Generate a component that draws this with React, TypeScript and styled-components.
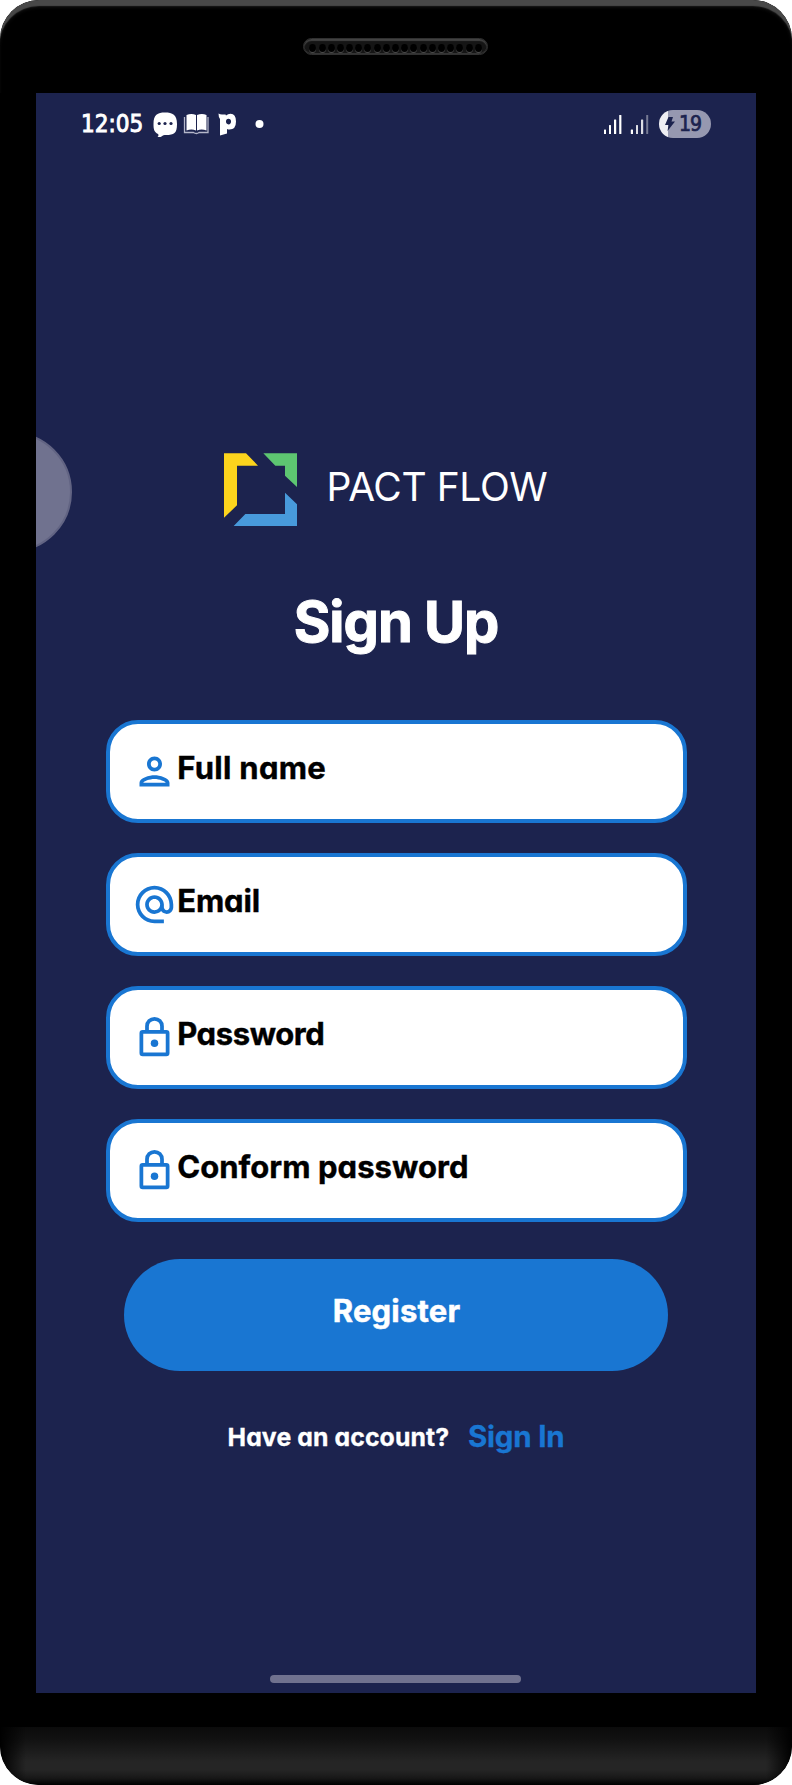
import React from "react";
import styled, { createGlobalStyle } from "styled-components";
import { MdAlternateEmail, MdOutlinePerson } from "react-icons/md";

const navy = "#1c234e";
const blue = "#1976d2";
const haze = "#70728f";

const GlobalStyle = createGlobalStyle`
  * { box-sizing: border-box; }
  body { margin: 0; background: #fff; }
`;

const Phone = styled.div`
  width: 792px;
  height: 1785px;
  display: flex;
  flex-direction: column;
  align-items: center;
  overflow: hidden;
  border-radius: 39px;
  background: #000;
  font-family: Inter, "Liberation Sans", sans-serif;
  font-feature-settings: "cv11";
`;

const TopBezel = styled.div`
  width: 100%;
  height: 93px;
  flex: none;
  display: flex;
  justify-content: center;
  align-items: flex-start;
  padding: 38px 1px 0 0;
  border-radius: 39px 39px 0 0;
  box-shadow: inset 0 7px 1px -1px #484848, inset 0 8px 5px -3px #333;
`;

const Speaker = styled.div`
  width: 185px;
  height: 17px;
  display: flex;
  justify-content: center;
  align-items: center;
  gap: 2.2px;
  padding-top: 2px;
  border-radius: 9px;
  background: #151515;
  border: 1px solid #303030;
  box-shadow: inset 0 2px 1px #424242, inset 0 -1px 0 #343434;
`;

const Hole = styled.span`
  width: 7px;
  height: 8px;
  border-radius: 50%;
  background: #000;
  box-shadow: 0 1px 0 #4a4a4a;
`;

const Screen = styled.main`
  position: relative;
  width: 720px;
  height: 1600px;
  flex: none;
  display: flex;
  flex-direction: column;
  align-items: center;
  overflow: hidden;
  background: ${navy};
`;

const BottomBezel = styled.div`
  width: 100%;
  height: 58px;
  margin-top: 34px;
  flex: none;
  border-radius: 0 0 39px 39px;
  background:
    linear-gradient(90deg, #000, transparent 26px, transparent 766px, #000),
    linear-gradient(#0b0b0b, #111 20%, #252525 60%, #252525 74%, #181818 88%, #000);
`;

const StatusBar = styled.div`
  width: 100%;
  height: 62px;
  flex: none;
  display: flex;
  justify-content: space-between;
  align-items: center;
  padding: 0 45px;
`;

const StatusGroup = styled.div`
  display: flex;
  align-items: center;
`;

const Clock = styled.span`
  width: 72px;
  font: 500 24px/30px "DejaVu Sans", sans-serif;
  font-stretch: condensed;
  letter-spacing: 0;
  -webkit-text-stroke: 0.9px #fff;
  color: #fff;
`;

const Battery = styled.span`
  width: 52px;
  height: 28px;
  margin-left: 10px;
  display: flex;
  align-items: center;
  padding-left: 6px;
  gap: 4px;
  border-radius: 14px;
  background: linear-gradient(90deg, #eeeef3 9px, #9698b0 9px);
  color: ${navy};
  font: 500 21px/28px "DejaVu Sans", sans-serif;
  font-stretch: condensed;
  letter-spacing: -1px;
  -webkit-text-stroke: 0.7px ${navy};
`;

const Brand = styled.div`
  width: 324px;
  height: 73px;
  margin-top: 298px;
  flex: none;
  display: flex;
  align-items: center;
  margin-left: -20px;
`;

const BrandName = styled.span`
  margin: -5px 0 0 29.5px;
  font-size: 39px;
  line-height: 48px;
  font-weight: 400;
  letter-spacing: -0.4px;
  white-space: nowrap;
  color: #fff;
`;

const Title = styled.h1`
  margin: 66px 0 68px;
  font-size: 56px;
  line-height: 60px;
  font-weight: 700;
  letter-spacing: -1px;
  -webkit-text-stroke: 1px #fff;
  color: #fff;
`;

const Form = styled.form`
  display: flex;
  flex-direction: column;
  align-items: center;
  gap: 30px;
`;

const Field = styled.label`
  width: 581px;
  height: 103px;
  display: flex;
  align-items: center;
  padding-left: 22px;
  border: 4px solid ${blue};
  border-radius: 32px;
  background: #fff;
  color: ${blue};
`;

const FieldText = styled.span<{ $track: number }>`
  padding: 0 0 7px 0.7px;
  font-size: 31px;
  line-height: 36px;
  font-weight: 700;
  letter-spacing: ${(p) => p.$track}px;
  -webkit-text-stroke: 0.4px #000;
  color: #000;
`;

const Register = styled.button`
  width: 544px;
  height: 112px;
  margin-top: 7px;
  padding: 0 0 8px 1px;
  border: 0;
  border-radius: 56px;
  background: ${blue};
  color: #fff;
  font: 700 31px/40px Inter, sans-serif;
  font-feature-settings: inherit;
  letter-spacing: 0.2px;
  -webkit-text-stroke: 0.5px #fff;
`;

const Footer = styled.div`
  width: 337px;
  height: 40px;
  margin-top: 46px;
  display: flex;
  align-items: center;
  justify-content: space-between;
  white-space: nowrap;
`;

const Question = styled.span`
  font-size: 24.8px;
  font-weight: 700;
  letter-spacing: 0.1px;
  -webkit-text-stroke: 0.3px #fff;
  color: #fff;
`;

const SignIn = styled.a`
  padding-bottom: 2px;
  font-size: 29.5px;
  font-weight: 650;
  letter-spacing: -0.2px;
  -webkit-text-stroke: 0.3px ${blue};
  color: ${blue};
`;

const HomeBar = styled.div`
  width: 251px;
  height: 8px;
  margin: auto 1px 10px 0;
  border-radius: 4px;
  background: ${haze};
`;

const AssistBubble = styled.div`
  position: absolute;
  left: -84px;
  top: 339px;
  width: 120px;
  height: 120px;
  border-radius: 50%;
  border: 2px solid #626483;
  background: ${haze};
`;

const Notifications = () => (
  <svg width="112" height="26" viewBox="0 0 112 26" fill="#fff">
    <path d="M12 1.5C19.5 1.5 24 3.5 24 13s-3 11-11 11c-2 0-3 0-4.500 1.500-1 .7-3 1-4 .5 1-1 1.300-2 .5-3C1 21 .5 18 .5 13 .5 3.500 4.500 1.500 12 1.500z" />
    <g fill={navy}>
      <circle cx="6.200" cy="12.500" r="1.600" />
      <circle cx="12" cy="12.500" r="1.600" />
      <circle cx="18" cy="12.500" r="1.600" />
    </g>
    <path d="M33.500 4q5-2 9.500 0v15.500q-4.500-2-9.500 0zM44 4q5-2 9.500 0v15.500q-5-2-9.500 0z" />
    <path d="M31.500 6v15.500h9q3 2 5.500 0h9V6" fill="none" stroke="#b5b7ca" strokeWidth="1.300" />
    <path
      fillRule="evenodd"
      d="M65.500 2.500q1.500 1 3.500 1h3.500l.5 1q2-1.800 4.500-1.800 5.500 0 5.500 7.800 0 8-6.500 8-1.300 0-2.500-.5v4.500L67 24.500V8q-1.500-1.500-1.500-5.500zM75.500 7.800a2.500 2.800 0 1 0 .01 5.600a2.500 2.800 0 1 0-.01-5.600z"
    />
    <circle cx="106.500" cy="13" r="4" />
  </svg>
);

const Signal = () => (
  <svg width="45" height="21" viewBox="0 0 45 21" fill="#fff">
    <rect x="0" y="15.500" width="2" height="4.500" rx=".5" />
    <rect x="5" y="11" width="2" height="9" rx=".5" />
    <rect x="10" y="5.500" width="2.200" height="14.500" rx=".5" />
    <rect x="15.200" y="1" width="2.200" height="19" rx=".5" />
    <rect x="26.800" y="15.500" width="2.200" height="4.500" rx=".5" />
    <rect x="32" y="11" width="2" height="9" rx=".5" opacity=".85" />
    <rect x="37" y="5.500" width="2.200" height="14.500" rx=".5" opacity=".85" />
    <rect x="42.200" y="1" width="2" height="19" rx=".5" opacity=".4" />
  </svg>
);

const Bolt = () => (
  <svg width="10" height="14" viewBox="0 0 10 14" fill={navy}>
    <path d="M3.500 0H8L6.500 4.500H10L2.500 14l1-6H0z" />
  </svg>
);

const LogoMark = () => (
  <svg width="73" height="73" viewBox="72 69 219 219">
    <path fill="#fcd41d" d="M72 70h66l36 37h-63v119l-39 37z" />
    <path fill="#5dc671" d="M190 70h101v101l-36-34v-30h-29z" />
    <path fill="#489adb" d="M255 188l36 35v65H101l35-36h119z" />
  </svg>
);

const LockIcon = () => (
  <svg width="45" height="45" viewBox="0 0 24 24" fill="none" stroke={blue} strokeWidth="2">
    <rect x="5" y="9" width="14" height="12" rx=".7" />
    <path d="M8 9V6a4 4 0 0 1 8 0v3" />
    <circle cx="12" cy="15" r="2" fill={blue} stroke="none" />
  </svg>
);

const fields = [
  { label: "Full name", icon: <MdOutlinePerson size={45} />, track: 0.3 },
  { label: "Email", icon: <MdAlternateEmail size={45} />, track: -0.1 },
  { label: "Password", icon: <LockIcon />, track: -0.4 },
  { label: "Conform password", icon: <LockIcon />, track: 0.05 },
];

export default function App() {
  return (
    <>
      <GlobalStyle />
      <Phone>
        <TopBezel>
          <Speaker>
            {Array.from({ length: 19 }, (_, i) => (
              <Hole key={i} />
            ))}
          </Speaker>
        </TopBezel>
        <Screen>
          <StatusBar>
            <StatusGroup>
              <Clock>12:05</Clock>
              <Notifications />
            </StatusGroup>
            <StatusGroup>
              <Signal />
              <Battery>
                <Bolt />
                19
              </Battery>
            </StatusGroup>
          </StatusBar>
          <Brand>
            <LogoMark />
            <BrandName>PACT FLOW</BrandName>
          </Brand>
          <Title>Sign Up</Title>
          <Form>
            {fields.map((f) => (
              <Field key={f.label}>
                {f.icon}
                <FieldText $track={f.track}>{f.label}</FieldText>
              </Field>
            ))}
            <Register type="button">Register</Register>
          </Form>
          <Footer>
            <Question>Have an account?</Question>
            <SignIn>Sign In</SignIn>
          </Footer>
          <HomeBar />
          <AssistBubble />
        </Screen>
        <BottomBezel />
      </Phone>
    </>
  );
}
